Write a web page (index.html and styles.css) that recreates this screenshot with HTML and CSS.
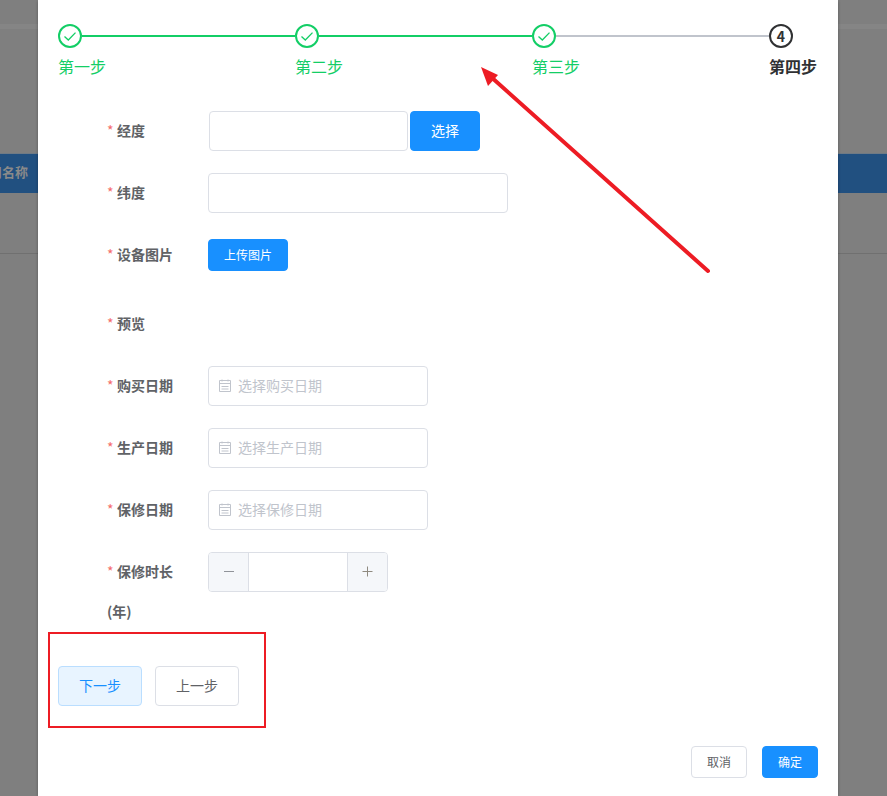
FILE: index.html
```html
<!DOCTYPE html>
<html lang="zh">
<head>
<meta charset="utf-8">
<title>设备</title>
<link rel="stylesheet" href="styles.css">
</head>
<body>
<div class="backdrop">
  <div class="bg-line-top"></div>
  <div class="bg-band"><span class="bg-band-text">用名称</span></div>
  <div class="bg-row"></div>
</div>
<main class="dialog">
  <div class="steps">
    <div class="step done">
      <div class="step-head"><span class="step-icon"><svg width="14" height="14" viewBox="0 0 14 14"><path d="M1.5 7.5 5.3 11 12.5 3.6" fill="none" stroke="#13ce66" stroke-width="1.3"/></svg></span><span class="step-line"></span></div>
      <div class="step-title">第一步</div>
    </div>
    <div class="step done">
      <div class="step-head"><span class="step-icon"><svg width="14" height="14" viewBox="0 0 14 14"><path d="M1.5 7.5 5.3 11 12.5 3.6" fill="none" stroke="#13ce66" stroke-width="1.3"/></svg></span><span class="step-line"></span></div>
      <div class="step-title">第二步</div>
    </div>
    <div class="step done">
      <div class="step-head"><span class="step-icon"><svg width="14" height="14" viewBox="0 0 14 14"><path d="M1.5 7.5 5.3 11 12.5 3.6" fill="none" stroke="#13ce66" stroke-width="1.3"/></svg></span><span class="step-line grey"></span></div>
      <div class="step-title">第三步</div>
    </div>
    <div class="step current">
      <div class="step-head"><span class="step-icon">4</span></div>
      <div class="step-title">第四步</div>
    </div>
  </div>

  <form class="form">
    <div class="row">
      <label class="label"><i class="req">*</i>经度</label>
      <div class="control shifted"><input class="input w199" type="text"><button type="button" class="btn primary pick">选择</button></div>
    </div>
    <div class="row">
      <label class="label"><i class="req">*</i>纬度</label>
      <div class="control"><input class="input w300" type="text"></div>
    </div>
    <div class="row upload-row">
      <label class="label"><i class="req">*</i>设备图片</label>
      <div class="control"><button type="button" class="btn primary upload">上传图片</button></div>
    </div>
    <div class="row">
      <label class="label"><i class="req">*</i>预览</label>
    </div>
    <div class="row">
      <label class="label"><i class="req">*</i>购买日期</label>
      <div class="control"><div class="date"><svg class="cal" width="14" height="14" viewBox="0 0 14 14"><path d="M1.5 1.5h11v11h-11zM1.5 4.5h11M3.5 7.5h7M3.5 10h7M4 .5v2M10 .5v2" fill="none" stroke="#c0c4cc" stroke-width="1"/></svg><span class="ph">选择购买日期</span></div></div>
    </div>
    <div class="row">
      <label class="label"><i class="req">*</i>生产日期</label>
      <div class="control"><div class="date"><svg class="cal" width="14" height="14" viewBox="0 0 14 14"><path d="M1.5 1.5h11v11h-11zM1.5 4.5h11M3.5 7.5h7M3.5 10h7M4 .5v2M10 .5v2" fill="none" stroke="#c0c4cc" stroke-width="1"/></svg><span class="ph">选择生产日期</span></div></div>
    </div>
    <div class="row">
      <label class="label"><i class="req">*</i>保修日期</label>
      <div class="control"><div class="date"><svg class="cal" width="14" height="14" viewBox="0 0 14 14"><path d="M1.5 1.5h11v11h-11zM1.5 4.5h11M3.5 7.5h7M3.5 10h7M4 .5v2M10 .5v2" fill="none" stroke="#c0c4cc" stroke-width="1"/></svg><span class="ph">选择保修日期</span></div></div>
    </div>
    <div class="row last">
      <label class="label wrap"><i class="req">*</i>保修时长(年)</label>
      <div class="control"><div class="number"><span class="num-btn left"><svg width="12" height="12" viewBox="0 0 12 12"><path d="M1 5.5h10" stroke="#909399" stroke-width="1"/></svg></span><span class="num-value"></span><span class="num-btn right"><svg width="12" height="12" viewBox="0 0 12 12"><path d="M0.5 5.5h10M5.5 .5v10" stroke="#8f8a80" stroke-width="1"/></svg></span></div></div>
    </div>
    <div class="step-actions">
      <button type="button" class="btn next">下一步</button>
      <button type="button" class="btn plain prev">上一步</button>
    </div>
  </form>

  <footer class="footer">
    <button type="button" class="btn plain small">取消</button>
    <button type="button" class="btn primary small">确定</button>
  </footer>
</main>
<svg class="annot" width="887" height="796" viewBox="0 0 887 796" aria-hidden="true">
  <rect x="49" y="633" width="216" height="94" fill="none" stroke="#ed1c24" stroke-width="2"/>
  <path d="M708 271 490 76" stroke="#ed1c24" stroke-width="4" stroke-linecap="round" fill="none"/>
  <path d="M481 67 498 75 488 86Z" fill="#ed1c24"/>
</svg>
</body>
</html>
```
FILE: styles.css
```css
* { box-sizing: border-box; }
html, body { margin: 0; height: 796px; overflow: hidden; }
body {
  position: relative;
  background: #7f7f7f;
  font-family: "Noto Sans CJK SC", "Noto Sans", sans-serif;
  font-size: 14px;
  color: #606266;
}
.backdrop { position: absolute; inset: 0; }
.bg-line-top { margin-top: 24px; height: 5px; background: #858585; }
.bg-band {
  margin-top: 124px;
  height: 40px;
  background: #215080;
  color: #8a8a8a;
  font-size: 13px;
  font-weight: 700;
  line-height: 36px;
  text-indent: -11px;
  white-space: nowrap;
  overflow: hidden;
  border-top: 1px solid #6f7a85;
}
.bg-row { margin-top: 60px; height: 1px; background: #707070; }

.dialog {
  position: absolute;
  left: 38px;
  top: 0;
  width: 800px;
  height: 796px;
  background: #fff;
  box-shadow: 0 1px 3px rgba(0, 0, 0, .3);
  padding: 24px 20px 0;
}
.steps { display: flex; }
.step { width: 237px; flex: none; }
.step.current { width: auto; }
.step-head { display: flex; align-items: center; height: 24px; }
.step-icon {
  width: 24px;
  height: 24px;
  flex: none;
  border: 2px solid #13ce66;
  border-radius: 50%;
  display: flex;
  align-items: center;
  justify-content: center;
  font-size: 14px;
  font-weight: 700;
  background: #fff;
}
.step-line { flex: 1; height: 2px; background: #13ce66; }
.step-line.grey { background: #c0c4cc; }
.step-title { font-size: 16px; line-height: 36px; height: 38px; color: #13ce66; }
.current .step-icon { border-color: #303133; color: #303133; }
.current .step-title { color: #303133; font-weight: 700; }

.form { margin-top: 25px; padding-left: 49px; }
.row { display: flex; min-height: 40px; margin-bottom: 22px; }
.row.upload-row { min-height: 47px; }
.row.last { margin-bottom: 0; }
.label {
  width: 101px;
  flex: none;
  font-weight: 700;
  line-height: 40px;
  margin-top: -1px;
  color: #606266;
}
.label.wrap { width: 70px; margin-right: 31px; }
.req {
  font-style: normal;
  font-weight: 400;
  color: #f56c6c;
  margin-right: 3.5px;
}
.control { display: flex; align-items: flex-start; }
.control.shifted { margin-left: 1px; }
.input {
  height: 40px;
  border: 1px solid #dcdfe6;
  border-radius: 4px;
  background: #fff;
  outline: none;
  padding: 0 15px;
}
.w199 { width: 199px; }
.w300 { width: 300px; }
.btn {
  font-family: inherit;
  font-size: 14px;
  border: 1px solid #dcdfe6;
  border-radius: 4px;
  background: #fff;
  color: #606266;
  padding: 0;
  text-align: center;
}
.btn.primary { background: #1890ff; border-color: #1890ff; color: #fff; }
.pick { width: 70px; height: 40px; margin-left: 2px; padding-bottom: 2px; }
.upload { width: 80px; height: 32px; margin-top: 4px; padding-bottom: 2px; font-size: 12px; }
.date {
  width: 220px;
  height: 40px;
  border: 1px solid #dcdfe6;
  border-radius: 4px;
  display: flex;
  align-items: center;
  padding-left: 9px;
}
.cal { margin-right: 6px; }
.ph { color: #c0c4cc; line-height: 36px; height: 38px; }
.number {
  width: 180px;
  height: 40px;
  border: 1px solid #dcdfe6;
  border-radius: 4px;
  display: flex;
  overflow: hidden;
}
.num-btn {
  width: 40px;
  flex: none;
  background: #f5f7fa;
  display: flex;
  align-items: center;
  justify-content: center;
}
.num-btn.left { border-right: 1px solid #dcdfe6; }
.num-btn.right { border-left: 1px solid #dcdfe6; }
.num-value { flex: 1; }

.step-actions {
  display: flex;
  gap: 13px;
  margin-left: -49px;
  margin-top: 35px;
}
.next, .prev { width: 84px; height: 40px; padding-bottom: 2px; }
.btn.next { background: #e8f4ff; border-color: #badeff; color: #1890ff; }
.footer {
  display: flex;
  justify-content: flex-end;
  gap: 15px;
  margin-top: 40px;
}
.small { width: 56px; height: 32px; font-size: 12px; padding-bottom: 2px; }

.annot { position: absolute; left: 0; top: 0; pointer-events: none; }
```
